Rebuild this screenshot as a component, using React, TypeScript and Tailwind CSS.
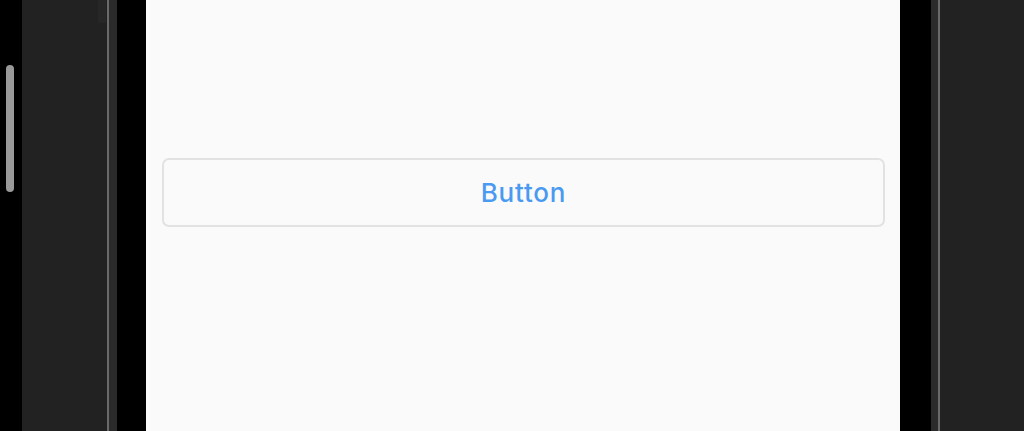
import React from "react";

export default function App() {
  return (
    <div className="flex h-[431px] w-[1024px] overflow-hidden bg-black">
      <div className="relative w-[22px] shrink-0 bg-black">
        <div className="absolute left-[6px] top-[65px] h-[127px] w-[8px] rounded-full bg-[#999999]" />
      </div>
      <div className="relative w-[85px] shrink-0 bg-[#222222]">
        <div className="absolute right-[1px] top-0 h-[23px] w-[8px] rounded-bl-[2px] bg-[#272727]" />
      </div>
      <div className="w-[2px] shrink-0 bg-[#6a6a6a]" />
      <div className="w-[8px] shrink-0 bg-[#2b2b2b]" />
      <div className="w-[29px] shrink-0 bg-black" />
      <div className="flex w-[754px] shrink-0 flex-col bg-[#fafafa] pl-[16px] pr-[15px] pt-[158px]">
        <button className="flex h-[69px] w-full items-center justify-center rounded-[7px] border-2 border-[#e2e2e2] bg-[#fafafa] pb-[1px] font-['Inter',sans-serif] text-[26px] font-medium tracking-[0.8px] text-[#4a9af1]">
          Button
        </button>
      </div>
      <div className="w-[31px] shrink-0 bg-black" />
      <div className="w-[7px] shrink-0 bg-[#2b2b2b]" />
      <div className="w-[2px] shrink-0 bg-[#6a6a6a]" />
      <div className="flex-1 bg-[#222222]" />
    </div>
  );
}
